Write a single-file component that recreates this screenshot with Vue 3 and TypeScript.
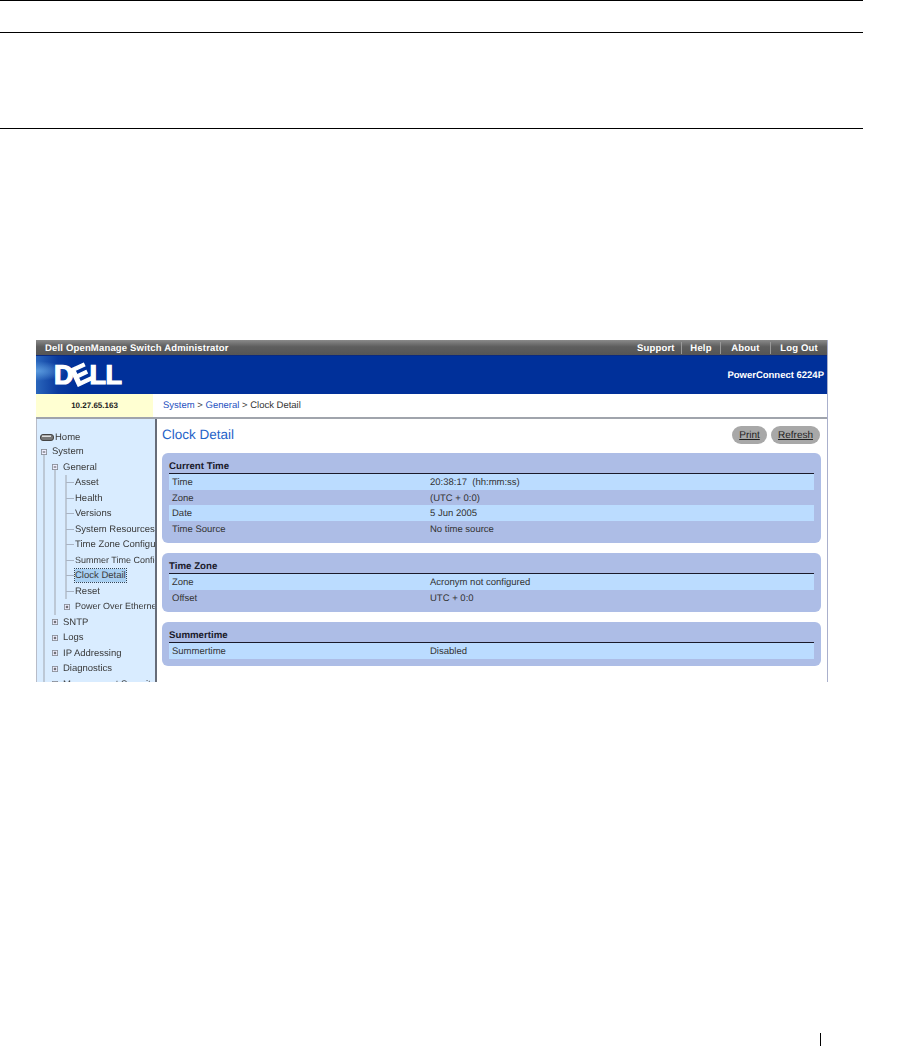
<script setup lang="ts">
interface TreeRow { label: string; x: number; icon: '' | 'home' | 'minus' | 'plus' | 'leaf'; guides: number[]; stem?: number; small?: boolean; active?: boolean }
const g1 = [7]
const g2 = [7, 18]
const g3 = [7, 18, 29]
const tree: TreeRow[] = [
  { label: 'Home', x: 3, icon: 'home', guides: [] },
  { label: 'System', x: 4, icon: 'minus', guides: g1, stem: 7 },
  { label: 'General', x: 15, icon: 'minus', guides: g2, stem: 18 },
  { label: 'Asset', x: 29, icon: 'leaf', guides: g3 },
  { label: 'Health', x: 29, icon: 'leaf', guides: g3 },
  { label: 'Versions', x: 29, icon: 'leaf', guides: g3 },
  { label: 'System Resources', x: 29, icon: 'leaf', guides: g3 },
  { label: 'Time Zone Configuration', x: 29, icon: 'leaf', guides: g3 },
  { label: 'Summer Time Configuration', x: 29, icon: 'leaf', guides: g3, small: true },
  { label: 'Clock Detail', x: 29, icon: 'leaf', guides: g3, active: true },
  { label: 'Reset', x: 29, icon: 'leaf', guides: g3 },
  { label: 'Power Over Ethernet', x: 27, icon: 'plus', guides: g2, small: true },
  { label: 'SNTP', x: 15, icon: 'plus', guides: g1 },
  { label: 'Logs', x: 15, icon: 'plus', guides: g1 },
  { label: 'IP Addressing', x: 15, icon: 'plus', guides: g1 },
  { label: 'Diagnostics', x: 15, icon: 'plus', guides: g1 },
  { label: 'Management Security', x: 15, icon: 'plus', guides: g1 },
]
const panels = [
  { title: 'Current Time', rows: [['Time', '20:38:17  (hh:mm:ss)'], ['Zone', '(UTC + 0:0)'], ['Date', '5 Jun 2005'], ['Time Source', 'No time source']] },
  { title: 'Time Zone', rows: [['Zone', 'Acronym not configured'], ['Offset', 'UTC + 0:0']] },
  { title: 'Summertime', rows: [['Summertime', 'Disabled']] },
]
</script>

<template>
  <div class="page">
    <div class="rule first"></div>
    <div class="rule second"></div>
    <div class="rule third"></div>
    <div class="shot">
      <div class="topbar">
        <span class="product">Dell OpenManage Switch Administrator</span>
        <nav class="links">
          <span class="link support">Support</span>
          <span class="link help">Help</span>
          <span class="link about">About</span>
          <span class="link logout">Log Out</span>
        </nav>
      </div>
      <div class="banner">
        <div class="logo"><span>D</span><span class="e">E</span><span>L</span><span>L</span></div>
        <span class="model">PowerConnect 6224P</span>
      </div>
      <div class="crumbrow">
        <div class="ip">10.27.65.163</div>
        <div class="crumbs"><span class="blue">System</span> &gt; <span class="blue">General</span> &gt; Clock Detail</div>
      </div>
      <div class="main">
        <aside class="side">
          <div v-for="r in tree" :key="r.label" class="row" :class="{ homerow: r.icon === 'home' }" :style="{ paddingLeft: r.x + 'px' }">
            <i v-for="g in r.guides" :key="g" class="guide" :class="{ start: g === r.stem }" :style="{ left: g + 'px' }"></i>
            <svg v-if="r.icon === 'home'" class="ic home" width="14" height="7" viewBox="0 0 14 7">
              <rect x="0.5" y="0.5" width="13" height="6" rx="2.5" fill="#777" stroke="#444" />
              <rect x="2" y="1.5" width="9" height="1.5" fill="#ddd" />
            </svg>
            <svg v-else-if="r.icon === 'minus' || r.icon === 'plus'" class="ic box" width="6" height="6" viewBox="0 0 7 7">
              <rect x="0.5" y="0.5" width="6" height="6" fill="#eef" stroke="#8a8f98" />
              <path d="M2 3.5h3" stroke="#333" />
              <path v-if="r.icon === 'plus'" d="M3.5 2v3" stroke="#333" />
            </svg>
            <span v-else-if="r.icon === 'leaf'" class="tick"></span>
            <span class="lbl" :class="{ small: r.small, active: r.active }">{{ r.label }}</span>
          </div>
        </aside>
        <section class="content">
          <div class="head">
            <h1>Clock Detail</h1>
            <div class="btns"><span class="btn print">Print</span><span class="btn refresh">Refresh</span></div>
          </div>
          <div v-for="p in panels" :key="p.title" class="panel">
            <h2>{{ p.title }}</h2>
            <div class="rows">
              <div v-for="(r, i) in p.rows" :key="r[0]" class="drow" :class="{ lite: i % 2 === 0 }">
                <span class="k">{{ r[0] }}</span><span class="v">{{ r[1] }}</span>
              </div>
            </div>
          </div>
        </section>
      </div>
    </div>
    <div class="tickmark"></div>
  </div>
</template>

<style>
html, body { margin: 0; background: #fff; }
</style>

<style scoped>
.page { width: 900px; height: 1048px; overflow: hidden; background: #fff; font-family: "Liberation Sans", Arial, sans-serif; display: flow-root; text-rendering: geometricPrecision; }
.rule { width: 863px; height: 1px; background: #000; }
.second { margin-top: 31px; }
.third { margin-top: 95px; }
.shot { margin: 211px 0 0 36px; width: 792px; height: 342px; overflow: hidden; display: flex; flex-direction: column; filter: blur(0.35px); border-right: 1px solid #aab0cc; box-sizing: border-box; }
.topbar { height: 15px; flex: none; background: linear-gradient(#8a8a8a, #5e5e5e 45%, #555); color: #fff; font-weight: bold; font-size: 9.5px; display: flex; align-items: center; justify-content: space-between; line-height: 15px; letter-spacing: 0.17px; }
.product { margin: 1px 0 0 9px; }
.links { display: flex; height: 100%; }
.link { display: block; text-align: center; border-right: 1px solid #999; height: 12px; line-height: 14px; margin-top: 2px; box-sizing: border-box; }
.support { width: 45px; padding-right: 8px; }
.help { width: 39px; }
.about { width: 50px; }
.logout { width: 56px; border-right: 0; }
.banner { height: 39px; flex: none; background: radial-gradient(ellipse 30px 10px at 0 15px, #5a9ade, transparent), linear-gradient(90deg, #2a66bc 0, #0a3a9e 22px, #00309a 40px); display: flex; align-items: center; justify-content: space-between; border-top: 1px solid #0a2a80; box-sizing: border-box; }
.logo { margin-left: 18px; display: flex; color: #fff; font-weight: bold; font-size: 27px; line-height: 39px; letter-spacing: -0.5px; -webkit-text-stroke: 1.2px #fff; }
.logo .e { display: inline-block; transform: rotate(-25deg); margin: 0 0 0 -1px; }
.model { color: #fff; font-weight: bold; font-size: 9.5px; margin-right: 3px; }
.crumbrow { height: 23px; flex: none; display: flex; background: #fff; border-bottom: 2px solid #a0a4ac; box-sizing: content-box; }
.ip { width: 117px; background: #ffffd2; color: #222; font-weight: bold; font-size: 8px; text-align: center; line-height: 23px; }
.crumbs { font-size: 9.5px; color: #333; margin-left: 10px; line-height: 24px; }
.blue { color: #2450c0; }
.main { flex: 1; display: flex; min-height: 0; }
.side { width: 121px; flex: none; overflow: hidden; box-sizing: border-box; background: #d9ecff; border-left: 1px solid #b8bcc8; border-right: 2px solid #666c78; padding-top: 12.5px; }
.row { position: relative; height: 15.5px; line-height: 15.5px; display: flex; align-items: center; white-space: nowrap; font-size: 9.5px; color: #3a3a3a; }
.homerow { height: 12.5px; }
.guide { position: absolute; top: 0; bottom: 0; width: 2px; margin-left: -1px; background: #bcc8d6; }
.start { top: 50%; }
.ic { flex: none; position: relative; z-index: 1; }
.box { margin-right: 5px; }
.home { margin-right: 1px; }
.tick { width: 8px; flex: none; height: 1px; background: #a9b4c4; margin-right: 1px; position: relative; }
.lbl { display: inline-block; line-height: 13px; position: relative; }
.small { font-size: 9px; }
.active { background: #a9d0f2; outline: 1px dotted #345; }
.content { flex: 1; min-width: 0; background: #fff; padding: 6px 6px 0 5px; }
.head { display: flex; justify-content: space-between; align-items: center; height: 19px; margin-bottom: 9px; }
h1 { margin: 0; color: #1f63c8; font-weight: normal; font-size: 13.5px; }
.btns { display: flex; gap: 4px; margin-right: 1px; }
.btn { height: 18px; line-height: 19px; background: #a8a8a8; border-radius: 9px; font-size: 10px; color: #222; text-decoration: underline; text-align: center; }
.print { width: 35px; }
.refresh { width: 49px; }
.panel { background: #adbde6; border-radius: 6px; padding: 7px 7px 7px; margin-bottom: 10px; }
h2 { margin: 0; font-size: 9.7px; line-height: 12px; padding-top: 1px; color: #1a1a2a; border-bottom: 1px solid #1a1a2a; font-weight: bold; }
.drow { height: 15.5px; line-height: 17px; font-size: 9.5px; color: #333; display: flex; }
.lite { background: #bbdcff; }
.k { width: 258px; margin-left: 3px; }
.v { white-space: pre; }
.tickmark { width: 1px; height: 13px; background: #000; margin: 351px 0 0 820px; }
</style>
